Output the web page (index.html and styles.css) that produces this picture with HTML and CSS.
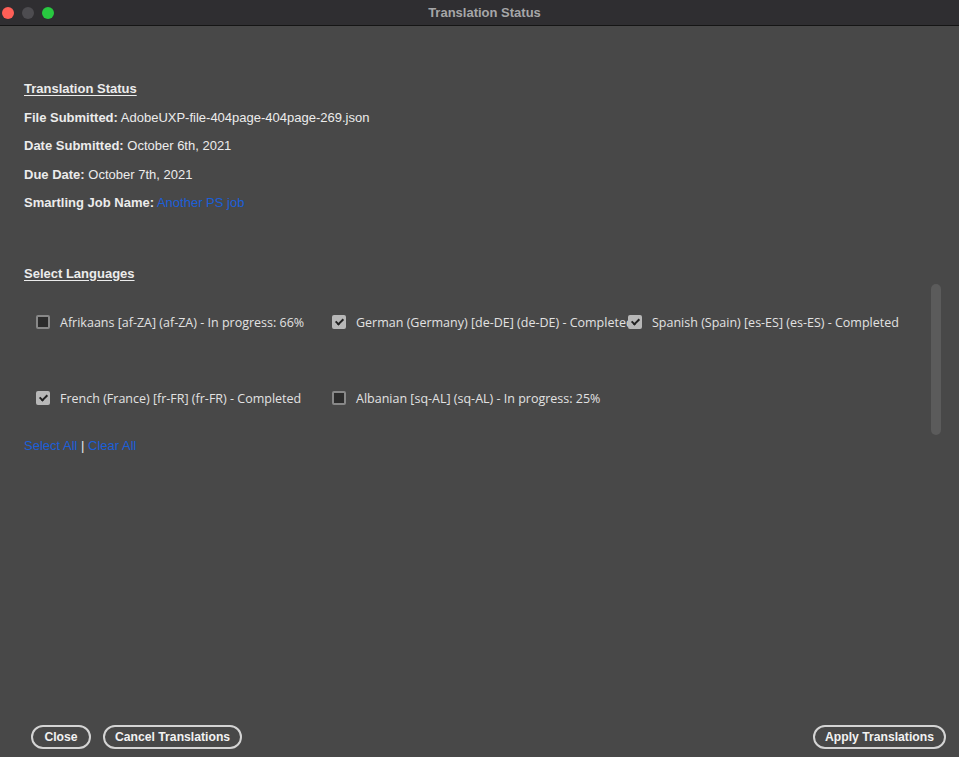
FILE: index.html
```html
<!DOCTYPE html>
<html lang="en">
<head>
  <meta charset="UTF-8" />
  <title>Translation Status</title>
  <meta name="viewport" content="width=device-width, initial-scale=1.0" />
  <link rel="stylesheet" href="styles.css">
</head>
<body>
  <div class="titlebar">
    <div class="lights">
      <span class="light red"></span>
      <span class="light gray"></span>
      <span class="light green"></span>
    </div>
    <div class="window-title">Translation Status</div>
  </div>

  <main class="content">
    <section class="info">
      <h2 class="heading">Translation Status</h2>
      <p class="row"><b>File Submitted:</b> AdobeUXP-file-404page-404page-269.json</p>
      <p class="row"><b>Date Submitted:</b> October 6th, 2021</p>
      <p class="row"><b>Due Date:</b> October 7th, 2021</p>
      <p class="row"><b>Smartling Job Name:</b> <a class="link" href="#">Another PS job</a></p>
    </section>

    <section class="languages">
      <h2 class="heading">Select Languages</h2>
      <div class="lang-grid">
        <label class="lang"><span class="box"></span><span class="lang-name">Afrikaans [af-ZA] (af-ZA) - In progress: 66%</span></label>
        <label class="lang"><span class="box checked"></span><span class="lang-name">German (Germany) [de-DE] (de-DE) - Completed</span></label>
        <label class="lang"><span class="box checked"></span><span class="lang-name">Spanish (Spain) [es-ES] (es-ES) - Completed</span></label>
        <label class="lang"><span class="box checked"></span><span class="lang-name">French (France) [fr-FR] (fr-FR) - Completed</span></label>
        <label class="lang"><span class="box"></span><span class="lang-name">Albanian [sq-AL] (sq-AL) - In progress: 25%</span></label>
      </div>
      <p class="row select-links"><a class="link" href="#">Select All</a> | <a class="link" href="#">Clear All</a></p>
      <div class="scroll-thumb"></div>
    </section>
  </main>

  <footer class="actions">
    <div class="left">
      <button class="btn close">Close</button>
      <button class="btn">Cancel Translations</button>
    </div>
    <button class="btn">Apply Translations</button>
  </footer>
</body>
</html>
```

FILE: styles.css
```css
html, body {
  height: 100%;
}
body {
  margin: 0;
  display: flex;
  flex-direction: column;
  background: #484848;
  color: #ececec;
  font-family: "Liberation Sans", Arial, sans-serif;
  font-size: 13px;
  overflow: hidden;
}
.titlebar {
  height: 25px;
  flex: none;
  display: flex;
  align-items: center;
  background: #2f2e31;
  border-bottom: 1px solid #151515;
  position: relative;
}
.lights {
  display: flex;
  gap: 8px;
  padding-left: 2px;
}
.light {
  width: 12px;
  height: 12px;
  border-radius: 50%;
}
.red { background: #fe5f57; }
.gray { background: #4d4c50; }
.green { background: #28c840; }
.window-title {
  position: absolute;
  left: 10px;
  right: 0;
  text-align: center;
  color: #a6a6a8;
  font-weight: bold;
  font-size: 13px;
}
.content {
  flex: 1;
  padding: 49px 24px 0;
}
.heading {
  margin: 0;
  font-size: 13px;
  line-height: 28.5px;
  text-decoration: underline;
  text-underline-offset: 2px;
}
.row {
  margin: 0;
  line-height: 28.5px;
}
.link {
  color: #1b5fd9;
  text-decoration: none;
}
.languages {
  margin-top: 42px;
  position: relative;
}
.lang-grid {
  display: grid;
  grid-template-columns: repeat(3, 296px);
  row-gap: 48px;
  margin-top: 20px;
  padding-left: 12px;
}
.lang {
  display: flex;
  align-items: center;
  height: 28px;
  gap: 10px;
  white-space: nowrap;
  min-width: 0;
  font-family: "Open Sans", "Noto Sans", sans-serif;
  font-size: 12.5px;
  color: #e2e2e2;
}
.box {
  flex: none;
  width: 10px;
  height: 10px;
  border: 2px solid #888;
  border-radius: 2px;
  background: #2c2c2c;
  position: relative;
  z-index: 1;
}
.box.checked {
  background: #b8b8b8;
  border-color: #b8b8b8;
}
.box.checked::after {
  content: "";
  position: absolute;
  left: 3px;
  top: 0px;
  width: 3px;
  height: 6px;
  border: solid #222;
  border-width: 0 2px 2px 0;
  transform: rotate(45deg);
}
.select-links {
  margin-top: 20px;
}
.scroll-thumb {
  position: absolute;
  right: -6px;
  top: 24px;
  width: 10px;
  height: 151px;
  border-radius: 5px;
  background: #5b5b5b;
}
.actions {
  flex: none;
  display: flex;
  justify-content: space-between;
  align-items: center;
  padding: 0 13px 8px 31px;
}
.left {
  display: flex;
  gap: 12px;
}
.btn {
  height: 24px;
  padding: 0 10px;
  border: 2px solid #d4d4d4;
  border-radius: 12px;
  background: transparent;
  color: #f2f2f2;
  font-family: "Liberation Sans", Arial, sans-serif;
  font-weight: bold;
  font-size: 12.2px;
}
.btn.close {
  min-width: 60px;
}
```
